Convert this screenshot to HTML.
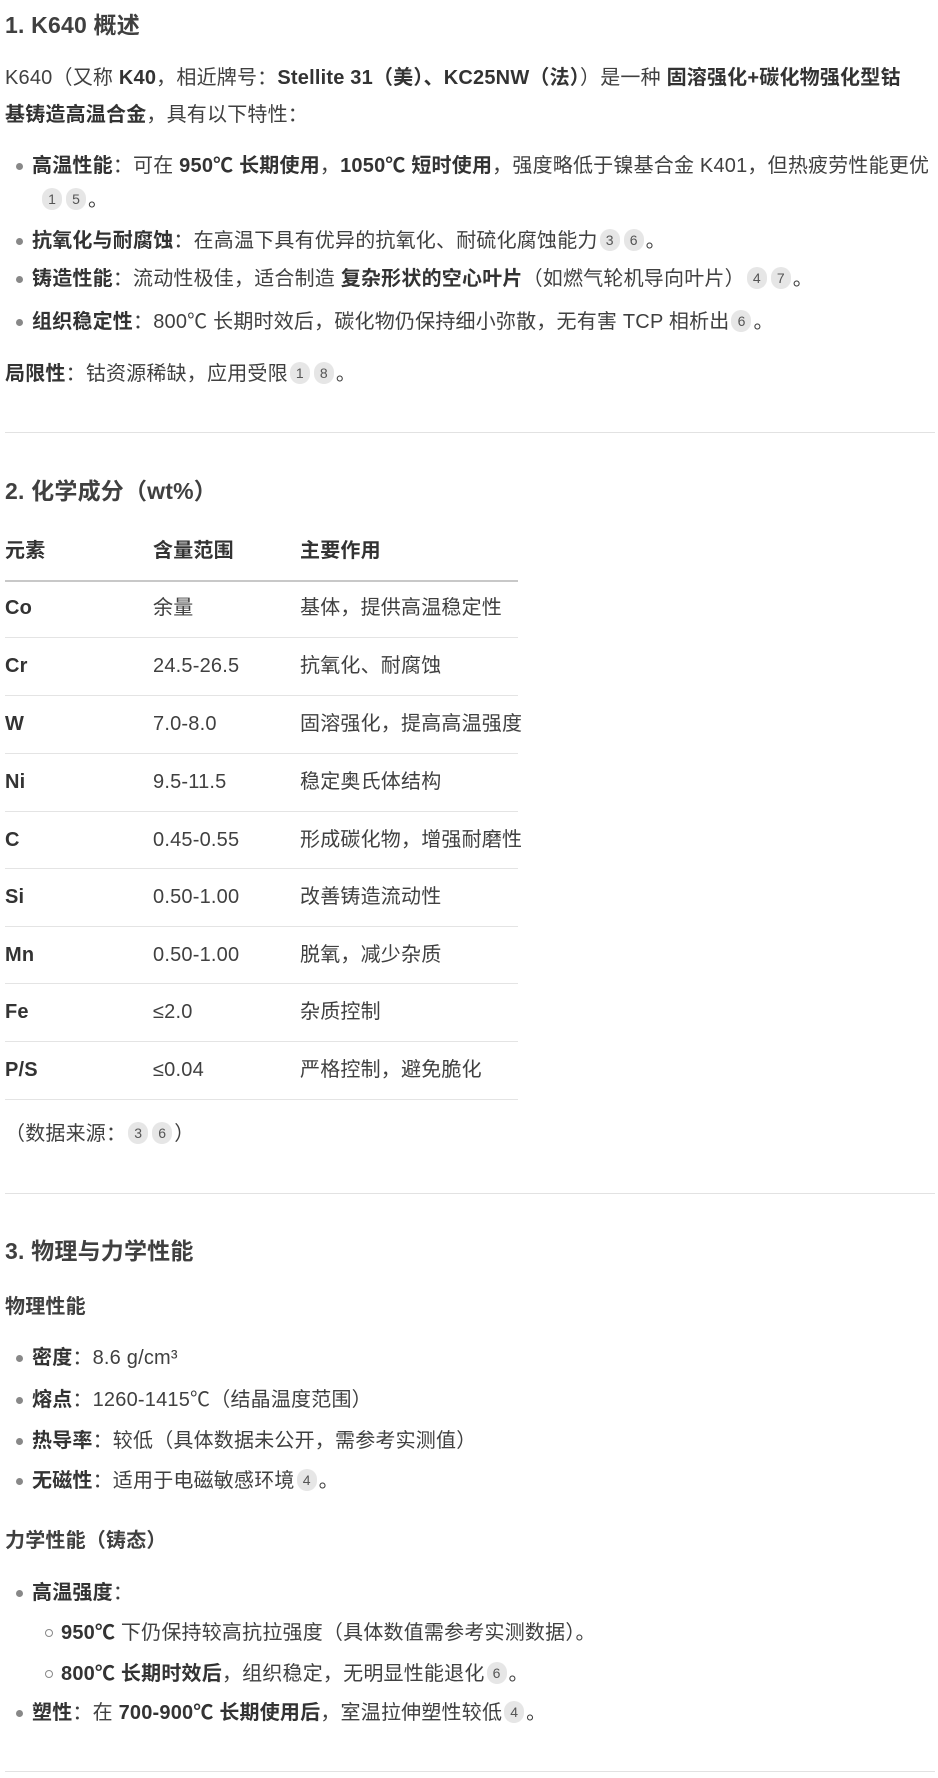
<!DOCTYPE html>
<html><head><meta charset="utf-8"><style>
body{margin:0;width:938px;height:1778px;background:#fff;color:#404040;font-family:"Liberation Sans","Noto Sans CJK SC",sans-serif;font-size:20px;letter-spacing:0.2px;position:relative;overflow:hidden}
.l{position:absolute;left:5px;white-space:nowrap;line-height:37px;height:37px}
.h{font-weight:bold;font-size:23px}
.s{font-weight:bold;font-size:20px}
b{font-weight:bold;color:#333}
.li{left:32px}
.li:before{content:"";position:absolute;left:-16px;top:15px;width:7px;height:7px;border-radius:50%;background:#888}
.sub{left:61px}
.sub:before{content:"";position:absolute;left:-16px;top:14px;width:6px;height:6px;border-radius:50%;border:1px solid #888}
.c{display:inline-block;min-width:12px;padding:0 4px;height:22px;line-height:22px;border-radius:11px;background:#e6e6e6;color:#555;font-size:14px;letter-spacing:0;text-align:center;vertical-align:2px;margin:0 2px}
.hr{position:absolute;left:5px;width:930px;height:1px;background:#e2e2e2}
.tl{position:absolute;left:5px;width:513px;height:1px;background:#e4e4e4}
.c1{left:5px}.c2{left:153px}.c3{left:300px}
</style></head><body>
<div class="l h" style="top:7px">1. K640 概述</div>
<div class="l" style="top:60px">K640（又称 <b>K40</b>，相近牌号：<b>Stellite 31（美）、KC25NW（法）</b>）是一种 <b>固溶强化+碳化物强化型钴</b></div>
<div class="l" style="top:97px"><b>基铸造高温合金</b>，具有以下特性：</div>
<div class="l li" style="top:148px"><b>高温性能</b>：可在 <b>950℃ 长期使用</b>，<b>1050℃ 短时使用</b>，强度略低于镍基合金 K401，但热疲劳性能更优</div>
<div class="l" style="top:182px;left:40px"><span class="c">1</span><span class="c">5</span>。</div>
<div class="l li" style="top:223px"><b>抗氧化与耐腐蚀</b>：在高温下具有优异的抗氧化、耐硫化腐蚀能力<span class="c">3</span><span class="c">6</span>。</div>
<div class="l li" style="top:261px"><b>铸造性能</b>：流动性极佳，适合制造 <b>复杂形状的空心叶片</b>（如燃气轮机导向叶片）<span class="c">4</span><span class="c">7</span>。</div>
<div class="l li" style="top:304px"><b>组织稳定性</b>：800℃ 长期时效后，碳化物仍保持细小弥散，无有害 TCP 相析出<span class="c">6</span>。</div>
<div class="l" style="top:356px"><b>局限性</b>：钴资源稀缺，应用受限<span class="c">1</span><span class="c">8</span>。</div>
<div class="hr" style="top:432px"></div>
<div class="l h" style="top:473px">2. 化学成分（wt%）</div>
<div class="l c1" style="top:533px"><b>元素</b></div><div class="l c2" style="top:533px"><b>含量范围</b></div><div class="l c3" style="top:533px"><b>主要作用</b></div>
<div class="tl" style="top:580px;background:#c8c8c8;height:2px"></div>
<div class="l c1" style="top:590px"><b>Co</b></div><div class="l c2" style="top:590px">余量</div><div class="l c3" style="top:590px">基体，提供高温稳定性</div>
<div class="tl" style="top:637px"></div>
<div class="l c1" style="top:648px"><b>Cr</b></div><div class="l c2" style="top:648px">24.5-26.5</div><div class="l c3" style="top:648px">抗氧化、耐腐蚀</div>
<div class="tl" style="top:695px"></div>
<div class="l c1" style="top:706px"><b>W</b></div><div class="l c2" style="top:706px">7.0-8.0</div><div class="l c3" style="top:706px">固溶强化，提高高温强度</div>
<div class="tl" style="top:753px"></div>
<div class="l c1" style="top:764px"><b>Ni</b></div><div class="l c2" style="top:764px">9.5-11.5</div><div class="l c3" style="top:764px">稳定奥氏体结构</div>
<div class="tl" style="top:811px"></div>
<div class="l c1" style="top:822px"><b>C</b></div><div class="l c2" style="top:822px">0.45-0.55</div><div class="l c3" style="top:822px">形成碳化物，增强耐磨性</div>
<div class="tl" style="top:868px"></div>
<div class="l c1" style="top:879px"><b>Si</b></div><div class="l c2" style="top:879px">0.50-1.00</div><div class="l c3" style="top:879px">改善铸造流动性</div>
<div class="tl" style="top:926px"></div>
<div class="l c1" style="top:937px"><b>Mn</b></div><div class="l c2" style="top:937px">0.50-1.00</div><div class="l c3" style="top:937px">脱氧，减少杂质</div>
<div class="tl" style="top:983px"></div>
<div class="l c1" style="top:994px"><b>Fe</b></div><div class="l c2" style="top:994px">≤2.0</div><div class="l c3" style="top:994px">杂质控制</div>
<div class="tl" style="top:1041px"></div>
<div class="l c1" style="top:1052px"><b>P/S</b></div><div class="l c2" style="top:1052px">≤0.04</div><div class="l c3" style="top:1052px">严格控制，避免脆化</div>
<div class="tl" style="top:1099px"></div>
<div class="l" style="top:1116px">（数据来源：<span class="c">3</span><span class="c">6</span>）</div>
<div class="hr" style="top:1193px"></div>
<div class="l h" style="top:1233px">3. 物理与力学性能</div>
<div class="l s" style="top:1289px">物理性能</div>
<div class="l li" style="top:1340px"><b>密度</b>：8.6 g/cm³</div>
<div class="l li" style="top:1382px"><b>熔点</b>：1260-1415℃（结晶温度范围）</div>
<div class="l li" style="top:1423px"><b>热导率</b>：较低（具体数据未公开，需参考实测值）</div>
<div class="l li" style="top:1463px"><b>无磁性</b>：适用于电磁敏感环境<span class="c">4</span>。</div>
<div class="l s" style="top:1523px">力学性能（铸态）</div>
<div class="l li" style="top:1575px"><b>高温强度</b>：</div>
<div class="l sub" style="top:1615px"><b>950℃</b> 下仍保持较高抗拉强度（具体数值需参考实测数据）。</div>
<div class="l sub" style="top:1656px"><b>800℃ 长期时效后</b>，组织稳定，无明显性能退化<span class="c">6</span>。</div>
<div class="l li" style="top:1695px"><b>塑性</b>：在 <b>700-900℃ 长期使用后</b>，室温拉伸塑性较低<span class="c">4</span>。</div>
<div class="hr" style="top:1771px"></div>
</body></html>
